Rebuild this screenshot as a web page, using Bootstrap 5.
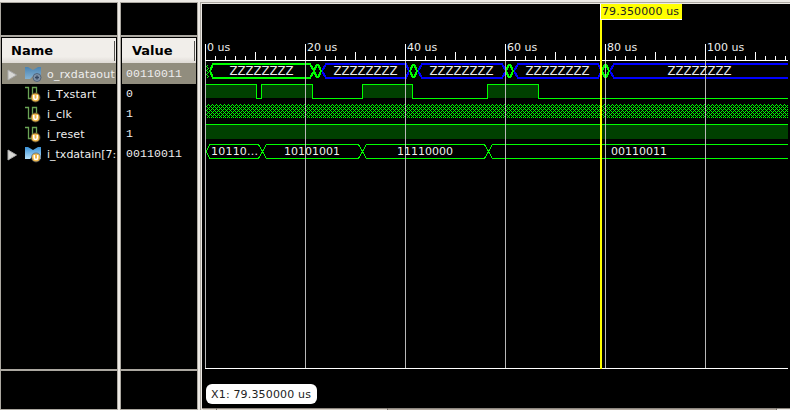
<!DOCTYPE html>
<html lang="en">
<head>
<meta charset="utf-8">
<title>Waveform viewer</title>
<link href="https://cdn.jsdelivr.net/npm/bootstrap@5.3.0/dist/css/bootstrap.min.css" rel="stylesheet">
<style>
body{width:790px;height:410px;background:#ece9e4;font-family:"DejaVu Sans",sans-serif;font-size:11px;line-height:14px;color:#fff}
.viewer{width:790px;height:410px;padding-top:2px}
.pane{background:#000;border:1px solid #aca8a1;height:408px;flex:none}
.names{width:118px;margin-right:2px}
.values{width:78px;margin-right:2px}
.spacer{height:32px;border-bottom:2px solid #aca8a1;flex:none;box-sizing:content-box}
.head{height:25px;margin:1px 1px 0;background:linear-gradient(#f1eeea 75%,#dedad5);color:#000;font-weight:bold;font-size:13px;flex:none}
.head::after{content:"";width:1px;height:20px;background:#55524e;margin-left:auto;margin-right:1px}
.names .head{padding-left:9px}
.values .head{padding-left:10px}
.signal{height:20px;flex:none;white-space:nowrap;margin:0 1px;color:#eee}
.signal.on{height:21px;background:#918d7e}
.signal svg{flex:none}
.arrow{width:10px;height:12px;margin-left:5px;margin-right:7px}
.ico{width:18px;height:18px;margin-right:5px}
.names .signal span{letter-spacing:.2px;padding-top:2px}
.names .signal .tight{letter-spacing:0}
.names .arrow{margin-top:2px}
.values .signal{font-family:"Liberation Mono",monospace;font-size:11.5px;letter-spacing:.1px;padding-left:4px}
.foot{border-top:2px solid #aca8a1;flex:1 1 0}
.list{height:306px;flex:none}
.waves{width:590px;height:408px;border-top:1px solid #aca8a1;border-left:1px solid #aca8a1;flex:none}
.waves svg{display:block}
svg text{font-family:"DejaVu Sans",sans-serif;font-size:11px;fill:#eee}
svg .idle text{font-size:11.7px}
</style>
<script src="https://cdn.jsdelivr.net/npm/bootstrap@5.3.0/dist/js/bootstrap.bundle.min.js"></script>
</head>
<body class="m-0 overflow-hidden">
<svg width="0" height="0" class="position-absolute">
<defs>
<linearGradient id="blue" x2="0" y2="1"><stop stop-color="#3a92d8"/><stop offset="1" stop-color="#b5e0fa"/></linearGradient>
<linearGradient id="dim" x2="0" y2="1"><stop stop-color="#4a83b2"/><stop offset="1" stop-color="#83b2d3"/></linearGradient>
<symbol id="bit" viewBox="0 0 18 18"><path d="M1 2.5H4.500V13.500H8.500V2.500H12.500V8" fill="none" stroke="#6aa355" stroke-width="1.300"/><circle cx="11.500" cy="12.500" r="5" fill="#756340" opacity=".7"/><circle cx="11.500" cy="12.500" r="4" fill="#f0b84a"/><path d="M9.800 10V13Q9.800 14.500 11.500 14.500T13.200 13V10" fill="none" stroke="#fff" stroke-width="1.500"/></symbol>
<symbol id="busin" viewBox="0 0 18 18"><path d="M1 2H4L9 5L14 2H17V14H12L9 11L6 14H1Z" fill="url(#blue)"/><circle cx="12" cy="12.500" r="5" fill="#57606a" opacity=".7"/><circle cx="12" cy="12.500" r="4" fill="#f0b84a"/><path d="M10.300 10V13Q10.300 14.500 12 14.500T13.700 13V10" fill="none" stroke="#fff" stroke-width="1.500"/></symbol>
<symbol id="busout" viewBox="0 0 18 18"><path d="M1 2H4L9 5L14 2H17V14H12L9 11L6 14H1Z" fill="url(#dim)"/><circle cx="13" cy="12.500" r="4" fill="#8093a8" stroke="#50647c"/><path d="M13 10.500V14.500M11 12.500H15" stroke="#34465f" stroke-width="1.300"/></symbol>
<symbol id="tri" viewBox="0 0 10 12"><path d="M1 1L9.500 6L1 11Z" fill="#d8d8d5" stroke="#aaa"/></symbol>
<pattern id="hatch" width="4" height="4" patternUnits="userSpaceOnUse"><path d="M0 0h1v1h-1zM1 1h1v1h-1zM3 1h1v1h-1zM2 2h1v1h-1zM1 3h1v1h-1zM3 3h1v1h-1z" fill="#0f0"/></pattern>
</defs>
</svg>
<main class="viewer d-flex">
<section class="pane names d-flex flex-column">
<div class="spacer"></div>
<div class="head d-flex align-items-center">Name</div>
<div class="list">
<div class="signal on d-flex align-items-center"><svg class="arrow"><use href="#tri"/></svg><svg class="ico"><use href="#busout"/></svg><span>o_rxdataout</span></div>
<div class="signal d-flex align-items-center"><svg class="arrow"></svg><svg class="ico"><use href="#bit"/></svg><span>i_Txstart</span></div>
<div class="signal d-flex align-items-center"><svg class="arrow"></svg><svg class="ico"><use href="#bit"/></svg><span>i_clk</span></div>
<div class="signal d-flex align-items-center"><svg class="arrow"></svg><svg class="ico"><use href="#bit"/></svg><span>i_reset</span></div>
<div class="signal d-flex align-items-center"><svg class="arrow"><use href="#tri"/></svg><svg class="ico"><use href="#busin"/></svg><span class="tight">i_txdatain[7:</span></div>
</div>
<div class="foot"></div>
</section>
<section class="pane values d-flex flex-column">
<div class="spacer"></div>
<div class="head d-flex align-items-center">Value</div>
<div class="list">
<div class="signal on d-flex align-items-center">00110011</div>
<div class="signal d-flex align-items-center">0</div>
<div class="signal d-flex align-items-center">1</div>
<div class="signal d-flex align-items-center">1</div>
<div class="signal d-flex align-items-center">00110011</div>
</div>
<div class="foot"></div>
</section>
<section class="waves">
<svg width="589" height="407" viewBox="201 3 589 407" shape-rendering="crispEdges">
<path d="M201 3H790V410H201Z" fill="#ece9e4"/>
<path d="M202 4H790V408H202Z" fill="#000"/>
<path d="M202 408H790V409H202Z" fill="#8d8780"/><path d="M203 409H387V410H203Z" fill="#d9d2c9"/><path d="M388 409H776V410H388Z" fill="#b3aaa0"/><path d="M216 408h1v2h-1zM387 408h1v2h-1zM776 408h1v2h-1z" fill="#77716a"/>
<g id="ruler" fill="none" stroke="#fff"></g>
<g fill="#004000"><path d="M206 85H256V98H206ZM262 85H312V98H262ZM363 85H412V98H363ZM488 85H538V98H488ZM206 125H788V139H206Z"/></g>
<path d="M206 65H209V78H206ZM206 104H788V118H206Z" fill="url(#hatch)"/>
<g fill="none" stroke="#0f0"><path d="M206 84.500H256.500V98.500H261.500V84.500H312.500V98.500H362.500V84.500H412.500V98.500H487.500V84.500H538.500V98.500H788M206 124.500H788"/>
<path d="M788 144.500H492.500L484.500 158.500H366.500L358.500 144.500H266.500L258.500 158.500H209.500L206.500 151.500L209.500 144.500H258.500L266.500 158.500H358.500L366.500 144.500H484.500L492.500 158.500H788"/></g>
<g fill="none" stroke-width="2">
<path stroke="#00f" d="M409 71L406 64H326L322 71L326 78H406ZM506 71L502 64H422L418 71L422 78H502ZM602 71L598 64H518L514 71L518 78H598ZM788 64H614L610 71L614 78H788"/>
<path stroke="#0f0" d="M314 71L310 64H213L210 71L213 78H310ZM314 71L316.500 65H318.500L321 71L318.500 77H316.500ZM410 71L412.500 65H414.500L417 71L414.500 77H412.500ZM506 71L508.500 65H510.500L513 71L510.500 77H508.500ZM602 71L604.500 65H606.500L609 71L606.500 77H604.500Z"/>
</g>
<g id="grid" fill="none" stroke="#b8b8b8"></g>
<path d="M205 368.500H788" stroke="#fff"/>
<g class="idle"><text x="229.500" y="75" textLength="64">ZZZZZZZZ</text><text x="333.500" y="75" textLength="64">ZZZZZZZZ</text><text x="429.500" y="75" textLength="64">ZZZZZZZZ</text><text x="525.500" y="75" textLength="64">ZZZZZZZZ</text><text x="667.500" y="75" textLength="64">ZZZZZZZZ</text></g>
<g><text x="211" y="155" textLength="47">10110...</text><text x="284" y="155">10101001</text><text x="397" y="155">11110000</text><text x="611" y="155">00110011</text></g>
<path d="M600 4H602V369H600Z" fill="#ff0"/>
<path d="M600 4H682V20H600Z" fill="#fff"/><path d="M601 4H682V19H601Z" fill="#ff0"/>
<text x="602" y="15" textLength="77" style="fill:#222">79.350000 us</text>
<rect x="206" y="384" width="111" height="20" rx="6" fill="#fff" shape-rendering="auto"/>
<text x="211" y="398" textLength="100" style="fill:#222">X1: 79.350000 us</text>
</svg>
</section>
</main>
<script>
const ns='http://www.w3.org/2000/svg',ruler=document.getElementById('ruler');
let ticks='M205 60.500H788',lines='';
for(let x=205,i=0;x<788;x+=10,i++){
  const top=i%10===0?44:i%5===0?52:56;
  ticks+=`M${x+.5} ${top}V61`;
  if(i%10===0){
    lines+=`M${x+.5} 61V368`;
    const t=document.createElementNS(ns,'text');
    t.setAttribute('x',x+2);t.setAttribute('y',51);t.setAttribute('stroke','none');
    t.textContent=i*2+' us';ruler.append(t);
  }
}
const p=document.createElementNS(ns,'path');p.setAttribute('d',ticks);ruler.append(p);
const g=document.createElementNS(ns,'path');g.setAttribute('d',lines);document.getElementById('grid').append(g);
</script>
</body>
</html>
